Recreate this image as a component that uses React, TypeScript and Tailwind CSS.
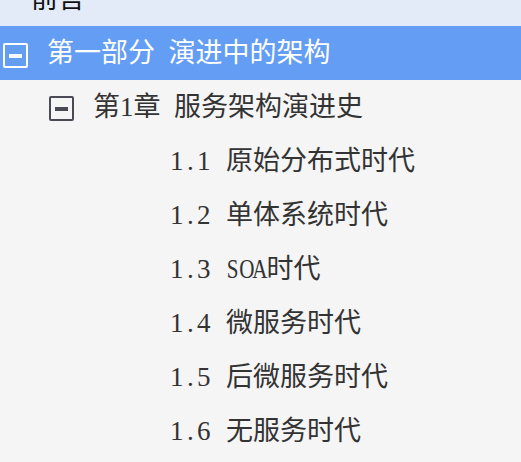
import React from "react";

const FONT = "font-['Liberation_Serif','Noto_Sans_CJK_SC',serif]";

function Half({ text, squeeze }: { text: string; squeeze?: boolean }) {
  return (
    <span className="font-['Liberation_Serif',serif]">
      {text.split("").map((c, i) => (
        <span key={i} className="inline-flex w-[13.5px] justify-center whitespace-pre">
          <span className={squeeze ? "inline-block scale-x-[0.78]" : "inline-block"}>
            {c === " " ? "\u00a0" : c}
          </span>
        </span>
      ))}
    </span>
  );
}

function MinusBox({ light }: { light?: boolean }) {
  return (
    <span
      className={
        "flex h-[25px] w-[25px] shrink-0 items-center justify-center rounded-[2px] border-2 " +
        (light ? "border-white" : "border-[#4a4a55]")
      }
    >
      <span className={"h-[4px] w-[13px] " + (light ? "bg-white" : "bg-[#4a4a55]")} />
    </span>
  );
}

const items: [string, string][] = [
  ["1.1", "原始分布式时代"],
  ["1.2", "单体系统时代"],
  ["1.3", "SOA时代"],
  ["1.4", "微服务时代"],
  ["1.5", "后微服务时代"],
  ["1.6", "无服务时代"],
];

export default function App() {
  return (
    <div className={"h-[462px] w-[521px] overflow-hidden bg-[#f5f5f5] text-[27px] leading-none " + FONT}>
      <div className="-mt-[28px] flex h-[54px] items-center bg-[#e2ebf7] pl-[31px] text-[#111]">
        前言
      </div>
      <div className="flex h-[54px] items-center bg-[#649df4] pl-[3px] text-white">
        <span className="mt-[5px]">
          <MinusBox light />
        </span>
        <span className="ml-[19px] flex items-center">
          第一部分
          <Half text=" " />
          演进中的架构
        </span>
      </div>
      <div className="flex h-[54px] items-center pl-[49px] text-[#333]">
        <span className="mt-[3px]">
          <MinusBox />
        </span>
        <span className="ml-[19px] flex items-center">
          第<Half text="1" />章<Half text=" " />服务架构演进史
        </span>
      </div>
      {items.map(([n, t]) => (
        <div key={n} className="flex h-[54px] items-center pl-[170px] text-[#333]">
          <Half text={n + " "} />
          <span className="ml-[2px] flex items-center">
            {t.startsWith("SOA") ? (
              <>
                <Half text="SOA" squeeze />
                {t.slice(3)}
              </>
            ) : (
              t
            )}
          </span>
        </div>
      ))}
    </div>
  );
}
